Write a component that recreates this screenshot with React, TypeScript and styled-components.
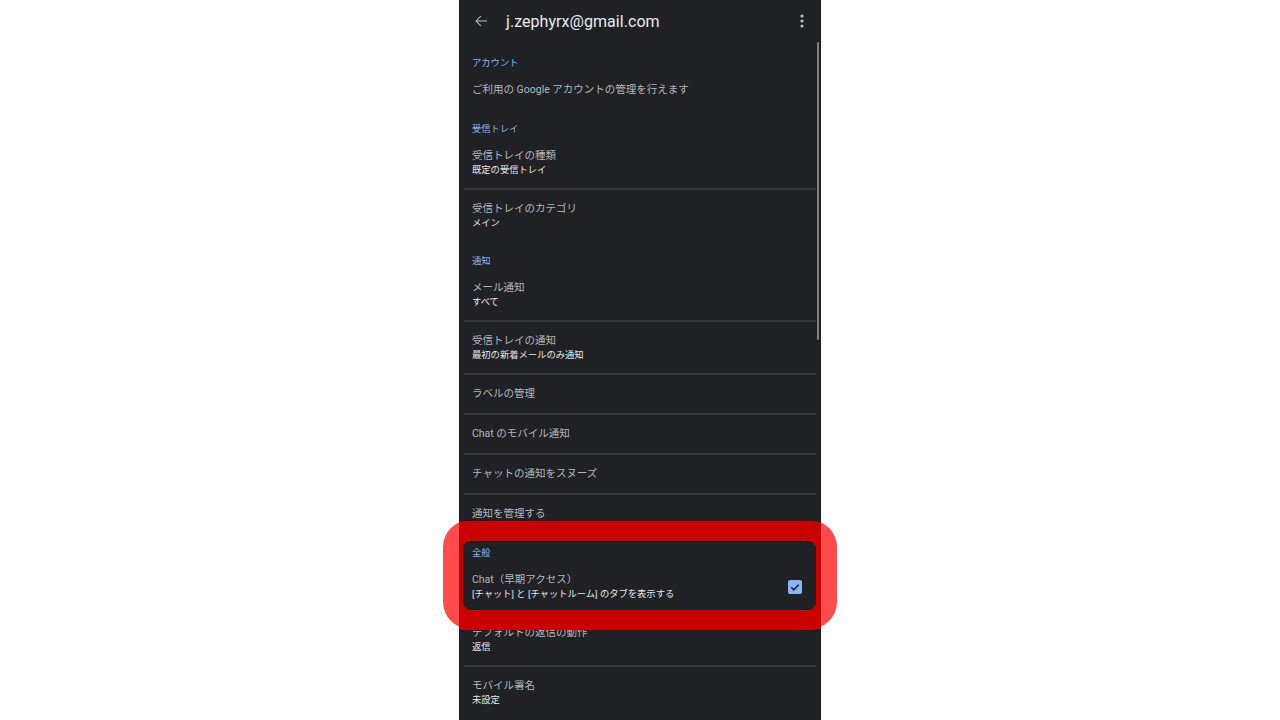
import React from 'react';
import styled, { createGlobalStyle } from 'styled-components';

const GlobalStyle = createGlobalStyle`
  html, body {
    margin: 0;
    padding: 0;
    background: #ffffff;
  }
  body {
    font-family: Roboto, "Noto Sans CJK JP", sans-serif;
  }
`;

type Item = {
  title: string;
  sub?: string;
  checked?: boolean;
};

type Section = {
  label: string;
  highlight?: number;
  items: Item[];
};

const sections: Section[] = [
  { label: 'アカウント', items: [{ title: 'ご利用の Google アカウントの管理を行えます' }] },
  {
    label: '受信トレイ',
    items: [
      { title: '受信トレイの種類', sub: '既定の受信トレイ' },
      { title: '受信トレイのカテゴリ', sub: 'メイン' },
    ],
  },
  {
    label: '通知',
    items: [
      { title: 'メール通知', sub: 'すべて' },
      { title: '受信トレイの通知', sub: '最初の新着メールのみ通知' },
      { title: 'ラベルの管理' },
      { title: 'Chat のモバイル通知' },
      { title: 'チャットの通知をスヌーズ' },
      { title: '通知を管理する' },
    ],
  },
  {
    label: '全般',
    highlight: 1,
    items: [
      { title: 'Chat（早期アクセス）', sub: '[チャット] と [チャットルーム] のタブを表示する', checked: true },
      { title: 'デフォルトの返信の動作', sub: '返信' },
      { title: 'モバイル署名', sub: '未設定' },
    ],
  },
];

const Page = styled.div`
  width: 1280px;
  height: 720px;
  display: flex;
  justify-content: center;
  overflow: hidden;
`;

const Frame = styled.div`
  position: relative;
  width: 362px;
  height: 720px;
`;

// light red part of the annotation that sticks out past the phone edges
const MarkerBack = styled.div`
  position: absolute;
  left: -16px;
  top: 520px;
  width: 394px;
  height: 109px;
  border-radius: 27px;
  background: #ff4b4b;
  z-index: 0;
`;

const Phone = styled.div`
  position: relative;
  z-index: 1;
  height: 720px;
  background: #202124;
  overflow: hidden;
  display: flex;
  flex-direction: column;
`;

const Toolbar = styled.div`
  height: 42px;
  flex-shrink: 0;
  display: flex;
  align-items: center;
  padding: 0 9px 0 13px;
`;

const Title = styled.div`
  flex: 1;
  margin-left: 16px;
  font-size: 16px;
  color: #e8eaed;
  letter-spacing: 0.05px;
`;

const List = styled.div`
  padding-top: 1px;
  display: flex;
  flex-direction: column;
`;

const SectionLabel = styled.div`
  padding: 14px 13px 2px;
  font-size: 9.3px;
  line-height: 12px;
  color: #8ab4f8;
`;

const Row = styled.div<{ $twoLine: boolean }>`
  display: flex;
  align-items: center;
  padding: 12px 19px 12px 13px;
  min-height: ${(p) => (p.$twoLine ? 27 : 14)}px;
`;

const RowText = styled.div`
  flex: 1;
  display: flex;
  flex-direction: column;
`;

const RowTitle = styled.div`
  font-size: 10.5px;
  line-height: 14px;
  color: #b4b7bb;
  white-space: nowrap;
`;

const RowSub = styled.div`
  font-size: 9.3px;
  line-height: 13px;
  color: #e6e7e9;
  white-space: nowrap;
`;

const Divider = styled.div`
  height: 2px;
  margin: 0 5px;
  background: #35383c;
`;

const Highlight = styled.div`
  position: relative;
  &::after {
    content: '';
    position: absolute;
    left: 4px;
    right: 5px;
    top: 8px;
    bottom: 2px;
    border-radius: 8px;
    box-shadow: 0 0 0 20px #c80000;
    pointer-events: none;
    z-index: 2;
  }
`;

const Check = styled.div`
  width: 14px;
  height: 14px;
  border-radius: 2px;
  background: #8ab4f8;
  display: flex;
  align-items: center;
  justify-content: center;
`;

const Scrollbar = styled.div`
  position: absolute;
  right: 2px;
  top: 42px;
  width: 2px;
  height: 298px;
  background: #7d8084;
  border-radius: 1px;
  z-index: 3;
`;

const BackIcon = () => (
  <svg width="18" height="18" viewBox="0 0 24 24">
    <path d="M20 11.3H6.9l5.3-5.3-1-1L4.5 12l6.7 7 1-1-5.3-5.3H20v-1.4z" fill="#bdc1c6" />
  </svg>
);

const MoreIcon = () => (
  <svg width="20" height="20" viewBox="0 0 24 24">
    <circle cx="12" cy="6" r="1.9" fill="#bdc1c6" />
    <circle cx="12" cy="12" r="1.9" fill="#bdc1c6" />
    <circle cx="12" cy="18" r="1.9" fill="#bdc1c6" />
  </svg>
);

const CheckMark = () => (
  <svg width="12" height="12" viewBox="0 0 24 24">
    <path d="M4.5 12.5l5 5 10-10" fill="none" stroke="#202124" strokeWidth="3.2" />
  </svg>
);

const SettingRow: React.FC<{ item: Item }> = ({ item }) => (
  <Row $twoLine={!!item.sub}>
    <RowText>
      <RowTitle>{item.title}</RowTitle>
      {item.sub && <RowSub>{item.sub}</RowSub>}
    </RowText>
    {item.checked && (
      <Check>
        <CheckMark />
      </Check>
    )}
  </Row>
);

const SettingsSection: React.FC<{ section: Section }> = ({ section }) => {
  const cut = section.highlight ?? 0;
  const rows = section.items.map((item, i) => (
    <React.Fragment key={item.title}>
      {i > 0 && <Divider />}
      <SettingRow item={item} />
    </React.Fragment>
  ));
  if (!cut) {
    return (
      <>
        <SectionLabel>{section.label}</SectionLabel>
        {rows}
      </>
    );
  }
  return (
    <>
      <Highlight>
        <SectionLabel>{section.label}</SectionLabel>
        {rows.slice(0, cut)}
      </Highlight>
      {rows.slice(cut)}
    </>
  );
};

export default function App() {
  return (
    <Page>
      <GlobalStyle />
      <Frame>
        <MarkerBack />
        <Phone>
          <Toolbar>
            <BackIcon />
            <Title>j.zephyrx@gmail.com</Title>
            <MoreIcon />
          </Toolbar>
          <List>
            {sections.map((s) => (
              <SettingsSection key={s.label} section={s} />
            ))}
          </List>
          <Scrollbar />
        </Phone>
      </Frame>
    </Page>
  );
}
